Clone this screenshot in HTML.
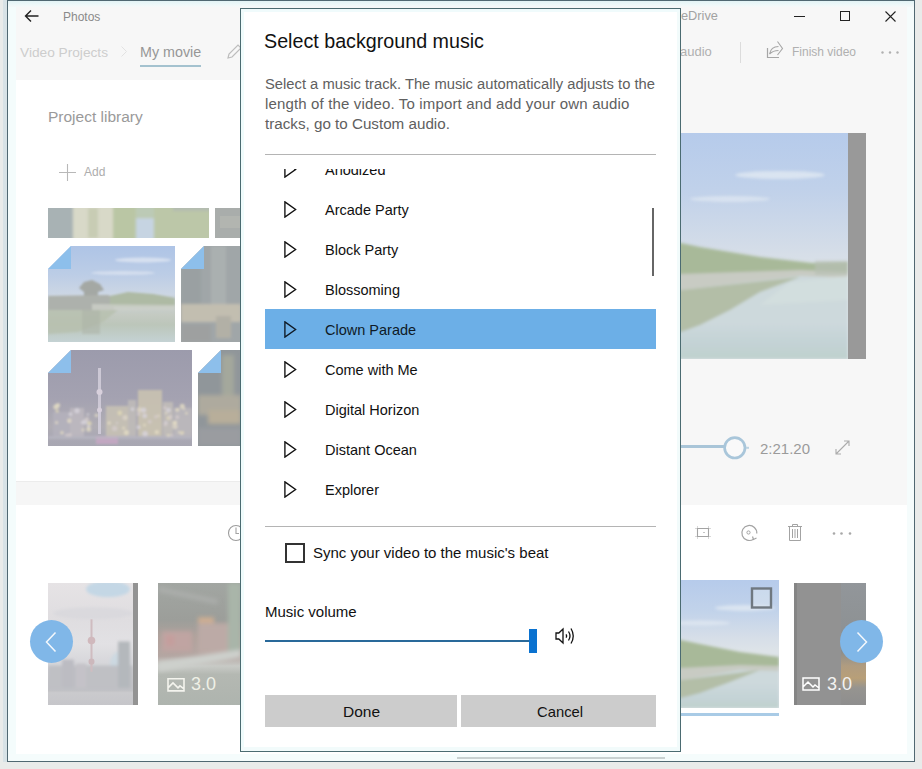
<!DOCTYPE html>
<html><head><meta charset="utf-8">
<style>
*{box-sizing:border-box;margin:0;padding:0}
html,body{width:922px;height:769px;overflow:hidden;background:#e9ebea;font-family:"Liberation Sans",sans-serif}
.a{position:absolute}
.t{position:absolute;white-space:nowrap;line-height:1}
</style></head><body>
<!-- outside strip -->
<div class="a" style="left:3px;top:0;width:4px;height:762px;background:#d7e2e6"></div>
<!-- window -->
<div class="a" id="win" style="left:7px;top:0;width:908px;height:762px;border:1px solid #506872;background:#f7f7f7;overflow:hidden">
</div>
<div class="a" style="left:8px;top:1px;width:906px;height:760px;overflow:hidden">
  <!-- header -->
  <div class="a" style="left:0;top:0;width:906px;height:79px;background:#f7f7f7"></div>
  <!-- left library card -->
  <div class="a" style="left:8px;top:79px;width:679px;height:401px;background:#fff"></div>
  <!-- right panel -->
  <div class="a" style="left:673px;top:79px;width:233px;height:425px;background:#f7f7f7"></div>
  <!-- band -->
  <div class="a" style="left:0;top:480px;width:673px;height:24px;background:#f6f6f6;border-top:1px solid #ececec"></div>
  <!-- storyboard -->
  <div class="a" style="left:8px;top:504px;width:898px;height:256px;background:#fff"></div>
  <div class="a" style="left:0;top:0;width:8px;height:760px;background:#f4fcfc"></div>
  <div class="a" style="left:899px;top:0;width:7px;height:760px;background:#f5fcfc"></div>
  <div class="a" style="left:0;top:753px;width:906px;height:7px;background:#f5fcfc"></div>
  <div class="a" style="left:0;top:0;width:906px;height:6px;background:linear-gradient(180deg,#e2f3f5,#eef8f9 60%,#f5f9f9)"></div>
</div>

<!-- title bar -->
<svg class="a" style="left:24px;top:9px" width="16" height="14" viewBox="0 0 16 14"><path d="M1.5 7H14.5M7 1.5L1.5 7L7 12.5" fill="none" stroke="#222" stroke-width="1.4"/></svg>
<div class="t" style="left:63px;top:11px;font-size:12px;color:#8a8a8a">Photos</div>
<div class="t" style="left:681px;top:10px;font-size:12.8px;color:#a2a2a2">eDrive</div>
<div class="a" style="left:794px;top:16px;width:11px;height:1px;background:#222"></div>
<div class="a" style="left:840px;top:11px;width:10px;height:10px;border:1px solid #222"></div>
<svg class="a" style="left:885px;top:11px" width="11" height="11" viewBox="0 0 11 11"><path d="M0.5 0.5L10.5 10.5M10.5 0.5L0.5 10.5" stroke="#222" stroke-width="1.1"/></svg>

<!-- nav -->
<div class="t" style="left:20px;top:46px;font-size:13.7px;color:#cdcdcd">Video Projects</div>
<svg class="a" style="left:121px;top:46px" width="6" height="11" viewBox="0 0 6 11"><path d="M0.5 0.5L5.5 5.5L0.5 10.5" fill="none" stroke="#e2e2e2" stroke-width="1"/></svg>
<div class="t" style="left:140px;top:45px;font-size:14.3px;color:#969696">My movie</div>
<div class="a" style="left:140px;top:65px;width:61px;height:2px;background:#a4c2cf"></div>
<svg class="a" style="left:226px;top:44px" width="16" height="16" viewBox="0 0 16 16"><path d="M2 14L3 10L12 1L15 4L6 13Z" fill="none" stroke="#bdbdbd" stroke-width="1.2"/></svg>
<div class="t" style="left:680px;top:45px;font-size:13px;color:#b0b0b0">audio</div>
<div class="a" style="left:740px;top:42px;width:1px;height:21px;background:#dcdcdc"></div>
<svg class="a" style="left:765px;top:38px" width="20" height="22" viewBox="0 0 20 22"><path d="M2.5 10V19.5H14" fill="none" stroke="#a6a6a6" stroke-width="1.2"/><path d="M12.5 3.5L17.5 10.5L12.5 17M4.5 16Q6 8.5 13.5 8.5M4.5 16Q8 12.5 13.5 12.5" fill="none" stroke="#a6a6a6" stroke-width="1.1"/></svg>
<div class="t" style="left:792px;top:46px;font-size:12px;color:#b0b0b0">Finish video</div>
<svg class="a" style="left:879px;top:50px" width="22" height="5" viewBox="0 0 22 5"><circle cx="3.5" cy="2.5" r="1.2" fill="#b0b0b0"/><circle cx="11" cy="2.5" r="1.2" fill="#b0b0b0"/><circle cx="18.5" cy="2.5" r="1.2" fill="#b0b0b0"/></svg>

<!-- library -->
<div class="t" style="left:48px;top:109px;font-size:15.5px;color:#9a9a9a">Project library</div>
<svg class="a" style="left:59px;top:164px" width="17" height="17" viewBox="0 0 17 17"><path d="M8.5 0V17M0 8.5H17" stroke="#b8b8b8" stroke-width="1.1"/></svg>
<div class="t" style="left:84px;top:166px;font-size:12px;color:#adadad">Add</div>

<!-- photos -->
<svg class="a" style="left:48px;top:208px" width="161" height="30" viewBox="0 0 161 30">
<defs><filter id="p1b" x="-5%" y="-20%" width="110%" height="140%"><feGaussianBlur stdDeviation="1.5"/></filter></defs>
<rect width="161" height="30" fill="#bcc7a8"/>
<g filter="url(#p1b)">
<rect x="-5" y="-5" width="30" height="40" fill="#a8b2b4"/>
<rect x="25" y="-5" width="40" height="40" fill="#d8d9c8"/>
<rect x="40" y="0" width="10" height="30" fill="#c8ccb4"/>
<rect x="65" y="-5" width="22" height="40" fill="#bac6a4"/>
<rect x="88" y="10" width="18" height="25" fill="#c6d4e2"/>
<rect x="88" y="-5" width="18" height="14" fill="#bccab6"/>
<rect x="125" y="-5" width="40" height="8" fill="#b4bcb0"/>
</g></svg>
<svg class="a" style="left:215px;top:208px" width="30" height="30" viewBox="0 0 30 30"><rect width="30" height="30" fill="#a9adab"/><rect x="5" y="8" width="20" height="12" fill="#b6b8b2" opacity=".7"/></svg>

<svg class="a" style="left:48px;top:246px" width="127" height="96" viewBox="0 0 127 96">
<defs><filter id="pab" x="-5%" y="-5%" width="110%" height="110%"><feGaussianBlur stdDeviation="1.2"/></filter>
<linearGradient id="pag" x1="0" y1="0" x2="0" y2="1"><stop offset="0" stop-color="#aec4e6"/><stop offset=".3" stop-color="#bccde6"/><stop offset=".5" stop-color="#ccd6e4"/><stop offset=".6" stop-color="#c8cfd0"/><stop offset=".72" stop-color="#c4cac2"/><stop offset=".82" stop-color="#bcc6ba"/><stop offset="1" stop-color="#c4d2d4"/></linearGradient></defs>
<rect width="127" height="96" fill="url(#pag)"/>
<g filter="url(#pab)">
<ellipse cx="95" cy="14" rx="28" ry="2.5" fill="#e4eaf4" opacity=".7"/>
<ellipse cx="75" cy="27" rx="32" ry="2" fill="#e4eaf4" opacity=".6"/>
<polygon points="31,42 36,36 44,34 52,38 56,44 50,46 50,52 36,52 36,46" fill="#a4a8a4"/>
<polygon points="0,50 60,49 66,52 66,64 0,64" fill="#adb1ac"/>
<polygon points="62,50 80,46 105,48 127,52 127,61 62,61" fill="#aebaa4"/>
<polygon points="44,58 127,59 127,64 44,65" fill="#ccd0c8" opacity=".8"/>
<polygon points="0,64 70,64 55,76 30,86 0,88" fill="#b6bfae" opacity=".8"/>
<rect x="34" y="64" width="18" height="24" fill="#adb4a8" opacity=".6"/>
</g></svg>
<svg class="a" style="left:48px;top:246px" width="23" height="23" viewBox="0 0 23 23"><polygon points="0,0 23,0 0,23" fill="#fff"/><polygon points="23,0 23,23 0,23" fill="#8dbfeb"/></svg>
<svg class="a" style="left:181px;top:246px" width="60" height="96" viewBox="0 0 60 96">
<defs><filter id="pbb" x="-10%" y="-10%" width="120%" height="120%"><feGaussianBlur stdDeviation="1.5"/></filter></defs>
<rect width="60" height="96" fill="#a0a6a8"/>
<g filter="url(#pbb)">
<rect x="0" y="0" width="20" height="60" fill="#9aa0a2"/>
<rect x="30" y="0" width="15" height="60" fill="#aab0b0"/>
<rect x="0" y="58" width="60" height="18" fill="#c2beb0"/>
<rect x="35" y="70" width="15" height="22" fill="#b2b0a6"/>
<rect x="0" y="78" width="30" height="18" fill="#9ea0a0"/>
</g></svg>
<svg class="a" style="left:181px;top:246px" width="23" height="23" viewBox="0 0 23 23"><polygon points="0,0 23,0 0,23" fill="#fff"/><polygon points="23,0 23,23 0,23" fill="#8dbfeb"/></svg>
<svg class="a" style="left:48px;top:350px" width="144" height="96" viewBox="0 0 144 96">
<defs><filter id="pcb" x="-5%" y="-5%" width="110%" height="110%"><feGaussianBlur stdDeviation="1.3"/></filter>
<linearGradient id="pcg" x1="0" y1="0" x2="0" y2="1"><stop offset="0" stop-color="#9c9bac"/><stop offset=".5" stop-color="#a4a2b1"/><stop offset=".8" stop-color="#b0adb4"/><stop offset=".9" stop-color="#aaa8b4"/><stop offset="1" stop-color="#a8a7b2"/></linearGradient></defs>
<rect width="144" height="96" fill="url(#pcg)"/>
<g filter="url(#pcb)">
<rect x="5" y="62" width="18" height="24" fill="#b4b2bc" opacity=".85"/>
<rect x="22" y="58" width="14" height="28" fill="#bdb9c0" opacity=".85"/>
<rect x="58" y="56" width="22" height="30" fill="#c8c2b4" opacity=".85"/>
<rect x="80" y="50" width="8" height="36" fill="#c0bcb8" opacity=".85"/>
<rect x="90" y="40" width="24" height="46" fill="#cbc4b0" opacity=".85"/>
<rect x="115" y="52" width="10" height="34" fill="#c2bdb8" opacity=".85"/>
<rect x="126" y="58" width="18" height="28" fill="#bcb8bc" opacity=".85"/>
<circle cx="37.1" cy="71.9" r="2.7" fill="#d8d4dc" opacity=".8"/>
<circle cx="69.0" cy="73.0" r="1.2" fill="#d4cccc" opacity=".8"/>
<circle cx="118.1" cy="63.0" r="1.5" fill="#ddd6c6" opacity=".8"/>
<circle cx="101.8" cy="71.8" r="2.0" fill="#d4cccc" opacity=".8"/>
<circle cx="91.3" cy="59.7" r="2.6" fill="#ddd6c6" opacity=".8"/>
<circle cx="75.6" cy="78.0" r="1.5" fill="#e4dcc4" opacity=".8"/>
<circle cx="134.3" cy="56.3" r="2.5" fill="#e4dcc4" opacity=".8"/>
<circle cx="41.4" cy="73.4" r="2.3" fill="#e0d8b8" opacity=".8"/>
<circle cx="129.3" cy="67.2" r="1.9" fill="#d4cccc" opacity=".8"/>
<circle cx="131.3" cy="82.2" r="1.3" fill="#e4dcc4" opacity=".8"/>
<circle cx="71.8" cy="63.0" r="2.4" fill="#e0d8b8" opacity=".8"/>
<circle cx="120.5" cy="68.1" r="2.1" fill="#e0d8b8" opacity=".8"/>
<circle cx="77.1" cy="67.6" r="2.6" fill="#ddd6c6" opacity=".8"/>
<circle cx="97.1" cy="83.8" r="2.8" fill="#d8d4dc" opacity=".8"/>
<circle cx="95.6" cy="60.1" r="2.7" fill="#d8d4dc" opacity=".8"/>
<circle cx="127.1" cy="72.6" r="2.2" fill="#ddd6c6" opacity=".8"/>
<circle cx="138.4" cy="63.3" r="1.3" fill="#e4dcc4" opacity=".8"/>
<circle cx="120.3" cy="85.7" r="1.8" fill="#e4dcc4" opacity=".8"/>
<circle cx="14.0" cy="82.8" r="1.7" fill="#e4dcc4" opacity=".8"/>
<circle cx="108.8" cy="82.1" r="2.2" fill="#e4dcc4" opacity=".8"/>
<circle cx="107.8" cy="66.7" r="1.7" fill="#d4cccc" opacity=".8"/>
<circle cx="123.9" cy="85.4" r="1.6" fill="#d4cccc" opacity=".8"/>
<circle cx="9.9" cy="55.2" r="2.2" fill="#e4dcc4" opacity=".8"/>
<circle cx="9.2" cy="61.1" r="1.7" fill="#e0d8b8" opacity=".8"/>
<circle cx="40.6" cy="76.4" r="1.7" fill="#d8d4dc" opacity=".8"/>
<circle cx="134.4" cy="82.8" r="1.8" fill="#e0d8b8" opacity=".8"/>
<circle cx="122.4" cy="67.0" r="2.3" fill="#d4cccc" opacity=".8"/>
<circle cx="18.8" cy="85.2" r="1.6" fill="#d4cccc" opacity=".8"/>
<circle cx="90.6" cy="77.2" r="1.9" fill="#d8d4dc" opacity=".8"/>
<circle cx="39.9" cy="64.4" r="1.2" fill="#d8d4dc" opacity=".8"/>
<circle cx="61.1" cy="73.0" r="1.8" fill="#e4dcc4" opacity=".8"/>
<circle cx="84.5" cy="59.1" r="1.9" fill="#d8d4dc" opacity=".8"/>
<circle cx="96.7" cy="65.9" r="2.4" fill="#d8d4dc" opacity=".8"/>
<circle cx="8.0" cy="56.9" r="2.7" fill="#e4dcc4" opacity=".8"/>
<circle cx="38.9" cy="69.1" r="2.2" fill="#d4cccc" opacity=".8"/>
<circle cx="29.0" cy="60.7" r="2.6" fill="#d8d4dc" opacity=".8"/>
<circle cx="40.7" cy="79.4" r="2.4" fill="#e4dcc4" opacity=".8"/>
<circle cx="8.6" cy="72.6" r="1.7" fill="#ddd6c6" opacity=".8"/>
<circle cx="35.0" cy="79.9" r="1.7" fill="#ddd6c6" opacity=".8"/>
<circle cx="96.5" cy="75.1" r="1.4" fill="#e4dcc4" opacity=".8"/>
<circle cx="48.5" cy="65.3" r="1.9" fill="#ddd6c6" opacity=".8"/>
<circle cx="120.5" cy="60.2" r="2.4" fill="#d8d4dc" opacity=".8"/>
<circle cx="34.4" cy="72.6" r="1.6" fill="#d8d4dc" opacity=".8"/>
<circle cx="21.3" cy="71.4" r="1.7" fill="#ddd6c6" opacity=".8"/>
<circle cx="117.9" cy="72.8" r="1.7" fill="#d8d4dc" opacity=".8"/>
<circle cx="116.8" cy="57.7" r="1.8" fill="#d4cccc" opacity=".8"/>
<circle cx="22.5" cy="64.1" r="1.9" fill="#d8d4dc" opacity=".8"/>
<circle cx="90.6" cy="64.0" r="1.9" fill="#d4cccc" opacity=".8"/>
<circle cx="129.3" cy="59.8" r="2.0" fill="#e4dcc4" opacity=".8"/>
<circle cx="117.4" cy="74.3" r="1.9" fill="#d4cccc" opacity=".8"/>
<circle cx="133.3" cy="83.7" r="1.3" fill="#ddd6c6" opacity=".8"/>
<circle cx="66.7" cy="78.4" r="2.7" fill="#d4cccc" opacity=".8"/>
<circle cx="78.4" cy="82.6" r="2.6" fill="#e4dcc4" opacity=".8"/>
<circle cx="136.1" cy="58.7" r="1.3" fill="#ddd6c6" opacity=".8"/>
<circle cx="127.0" cy="76.5" r="2.6" fill="#ddd6c6" opacity=".8"/>
<circle cx="126.5" cy="72.9" r="2.0" fill="#e4dcc4" opacity=".8"/>
<circle cx="21.3" cy="70.6" r="2.3" fill="#ddd6c6" opacity=".8"/>
<circle cx="75.9" cy="67.8" r="1.4" fill="#d4cccc" opacity=".8"/>
<circle cx="21.9" cy="85.1" r="2.0" fill="#d4cccc" opacity=".8"/>
<circle cx="110.6" cy="65.9" r="1.4" fill="#ddd6c6" opacity=".8"/>
<rect x="48" y="86" width="22" height="8" fill="#c8a8c4" opacity=".8"/>
<rect x="0" y="86" width="144" height="3" fill="#bcbac4" opacity=".6"/>
</g>
<rect x="50" y="18" width="3" height="66" fill="#d4cfdc" opacity=".85"/>
<circle cx="51.5" cy="42" r="3" fill="#d8d0dc"/>
<circle cx="51.5" cy="60" r="2.5" fill="#d8d0dc"/>
</svg>
<svg class="a" style="left:48px;top:350px" width="23" height="23" viewBox="0 0 23 23"><polygon points="0,0 23,0 0,23" fill="#fff"/><polygon points="23,0 23,23 0,23" fill="#8dbfeb"/></svg>
<svg class="a" style="left:198px;top:350px" width="43" height="96" viewBox="0 0 43 96">
<defs><filter id="pdb" x="-10%" y="-10%" width="120%" height="120%"><feGaussianBlur stdDeviation="2"/></filter></defs>
<rect width="43" height="96" fill="#90969a"/>
<g filter="url(#pdb)">
<rect x="24" y="5" width="12" height="50" fill="#a4a89c"/>
<rect x="0" y="45" width="43" height="20" fill="#aeaa9e"/>
<rect x="10" y="60" width="33" height="14" fill="#b8ae9a"/>
<rect x="0" y="78" width="43" height="18" fill="#9a9ca0"/>
</g></svg>
<svg class="a" style="left:198px;top:350px" width="23" height="23" viewBox="0 0 23 23"><polygon points="0,0 23,0 0,23" fill="#fff"/><polygon points="23,0 23,23 0,23" fill="#8dbfeb"/></svg>

<!-- preview -->
<svg class="a" style="left:660px;top:133px" width="188" height="226" viewBox="0 0 188 226">
<defs><linearGradient id="pv_sky" x1="0" y1="0" x2="0" y2="1"><stop offset="0" stop-color="#b6cbeb"/><stop offset="0.25" stop-color="#c0d1ea"/><stop offset="0.5" stop-color="#d3dce8"/><stop offset="0.62" stop-color="#dde3e8"/></linearGradient>
<linearGradient id="pv_w" x1="0" y1="0" x2="0" y2="1"><stop offset="0.6" stop-color="#cdd9dc"/><stop offset="0.8" stop-color="#c4d3d6"/><stop offset="1" stop-color="#bfd1cd"/></linearGradient>
<filter id="pv_b" x="-5%" y="-5%" width="110%" height="110%"><feGaussianBlur stdDeviation="1.6"/></filter></defs>
<rect width="188" height="226" fill="url(#pv_sky)"/>
<g filter="url(#pv_b)">
<rect x="0" y="135" width="188" height="91" fill="url(#pv_w)"/>
<ellipse cx="120" cy="42" rx="45" ry="4" fill="#e6ecf4" opacity=".7"/>
<ellipse cx="70" cy="66" rx="40" ry="3" fill="#e6ecf4" opacity=".6"/>
<polygon points="0,105 21,110 40,114 100,124 152,130 188,129 188,143 140,139 21,143 0,144" fill="#a8b999"/>
<polygon points="0,141 21,141 140,137 188,139 188,145 140,143 21,157 0,157" fill="#c8cbc3"/>
<polygon points="0,157 21,157 140,144 100,159 70,177 40,192 21,199 0,202" fill="#b3bea7"/>
<polygon points="130,149 188,143 188,167 100,172" fill="#d3dedf" opacity=".8"/>
<rect x="155" y="128" width="33" height="14" fill="#b7bfb4" opacity=".7"/>
</g>
</svg>
<div class="a" style="left:848px;top:133px;width:18px;height:226px;background:#999"></div>
<div class="a" style="left:675px;top:445px;width:50px;height:3px;background:#a9c5d8"></div>
<svg class="a" style="left:721px;top:434px" width="28" height="28" viewBox="0 0 28 28"><circle cx="13.8" cy="13.8" r="10.2" fill="#f9f9f9" stroke="#a9c6da" stroke-width="2.7"/><path d="M25 13.8H28" stroke="#bcd3e2" stroke-width="2"/></svg>
<div class="t" style="left:760px;top:441px;font-size:15px;color:#9b9b9b">2:21.20</div>
<svg class="a" style="left:835px;top:440px" width="15" height="15" viewBox="0 0 15 15"><path d="M1 14L14 1M1 9V14H6M9 1H14V6" fill="none" stroke="#ababab" stroke-width="1.1"/></svg>

<!-- storyboard toolbar -->
<svg class="a" style="left:227px;top:524px" width="18" height="18" viewBox="0 0 18 18"><circle cx="9" cy="9" r="7.5" fill="none" stroke="#9c9c9c" stroke-width="1.1"/><path d="M9 3.5V9.5H12" fill="none" stroke="#a3a3a3" stroke-width="1.1"/></svg>
<svg class="a" style="left:694px;top:525px" width="18" height="15" viewBox="0 0 18 15"><path d="M3.5 3.5H14.5V11.5H3.5Z" fill="none" stroke="#a3a3a3" stroke-width="1.1"/><path d="M1.5 3.5H2.5M3.5 1.5V2.5M14.5 1.5V2.5M15.5 3.5H16.5M15.5 11.5H16.5M14.5 12.5V13.5M3.5 12.5V13.5M1.5 11.5H2.5" fill="none" stroke="#b0b0b0" stroke-width="1"/><path d="M9 7.5H11" stroke="#c4c4c4" stroke-width="1"/></svg>
<svg class="a" style="left:740px;top:523px" width="19" height="19" viewBox="0 0 19 19"><path d="M13.5 16.2A7.5 7.5 0 1 1 16.8 10.5" fill="none" stroke="#a3a3a3" stroke-width="1.2"/><path d="M12.5 13.5L13.5 16.5L16.5 15" fill="none" stroke="#a3a3a3" stroke-width="1.2"/><circle cx="8.5" cy="9.5" r="1.6" fill="none" stroke="#a3a3a3" stroke-width="1"/></svg>
<svg class="a" style="left:788px;top:524px" width="14" height="17" viewBox="0 0 14 17"><path d="M0 2.5H14M4.5 2.5V0.5H9.5V2.5M1.5 2.5V16.5H12.5V2.5M4.5 5V14M7 5V14M9.5 5V14" fill="none" stroke="#a3a3a3" stroke-width="1"/></svg>
<svg class="a" style="left:831px;top:531px" width="22" height="5" viewBox="0 0 22 5"><circle cx="3" cy="2.5" r="1.3" fill="#a8a8a8"/><circle cx="10.5" cy="2.5" r="1.3" fill="#a8a8a8"/><circle cx="19" cy="2.5" r="1.3" fill="#a8a8a8"/></svg>

<!-- storyboard thumbs -->
<svg class="a" style="left:48px;top:583px" width="90" height="122" viewBox="0 0 90 121" preserveAspectRatio="none">
<defs><filter id="t1b" x="-10%" y="-10%" width="120%" height="120%"><feGaussianBlur stdDeviation="1.8"/></filter>
<linearGradient id="t1g" x1="0" y1="0" x2="0" y2="1"><stop offset="0" stop-color="#e6e3e5"/><stop offset=".3" stop-color="#dfdde0"/><stop offset=".5" stop-color="#e2e1e4"/><stop offset=".66" stop-color="#d6d6da"/><stop offset=".8" stop-color="#c6c6ca"/><stop offset=".88" stop-color="#c2c2c6"/><stop offset=".9" stop-color="#cacacd"/><stop offset="1" stop-color="#c6c6ca"/></linearGradient></defs>
<rect width="90" height="121" fill="url(#t1g)"/>
<g filter="url(#t1b)">
<ellipse cx="60" cy="6" rx="22" ry="8" fill="#bcd4e6" opacity=".8"/>
<ellipse cx="45" cy="30" rx="40" ry="6" fill="#d6d6da" opacity=".6"/>
<ellipse cx="72" cy="80" rx="10" ry="12" fill="#c4d8e4" opacity=".6"/>
<rect x="0" y="82" width="85" height="24" fill="#bfc0c4"/>
<rect x="70" y="58" width="12" height="46" fill="#b4b8bc"/>
<rect x="14" y="76" width="12" height="28" fill="#bcbcc2"/>
<rect x="28" y="80" width="10" height="24" fill="#c4c2c8"/>
</g>
<rect x="42.5" y="36" width="2" height="52" fill="#cfbcc0"/>
<circle cx="43.5" cy="57" r="3.8" fill="#d0b8bc"/>
<circle cx="43.5" cy="78" r="3" fill="#ccb8bc"/>
<rect x="85" y="0" width="5" height="121" fill="#939393"/>
</svg>
<svg class="a" style="left:158px;top:583px" width="83" height="122" viewBox="0 0 83 121" preserveAspectRatio="none">
<defs><filter id="t2b" x="-10%" y="-10%" width="120%" height="120%"><feGaussianBlur stdDeviation="2"/></filter>
<linearGradient id="t2g" x1="0" y1="0" x2="0" y2="1"><stop offset="0" stop-color="#a2a6a2"/><stop offset=".3" stop-color="#9c9e9a"/><stop offset=".45" stop-color="#b0a29c"/><stop offset=".6" stop-color="#b4a6a2"/><stop offset=".68" stop-color="#c8cac6"/><stop offset=".75" stop-color="#b4b8b2"/><stop offset="1" stop-color="#aeb4ae"/></linearGradient></defs>
<rect width="83" height="121" fill="url(#t2g)"/>
<g filter="url(#t2b)">
<rect x="70" y="0" width="13" height="70" fill="#a9b5a9"/>
<rect x="0" y="10" width="60" height="5" fill="#b0b2b0" opacity=".7" transform="rotate(12 30 13)"/>
<rect x="40" y="34" width="16" height="6" fill="#cfae92"/>
<rect x="4" y="48" width="30" height="20" fill="#c0a4a2"/><rect x="8" y="52" width="8" height="10" fill="#c89a9a" opacity=".7"/>
<rect x="40" y="40" width="30" height="30" fill="#bcaaa6"/>
<polygon points="0,78 83,66 83,74 0,88" fill="#cdd0cc"/>
</g>
<svg x="9" y="94" width="18" height="14" viewBox="0 0 18 14"><path d="M1 1H17V13H1ZM1 10L6 5L11 10L13 8L17 11" fill="none" stroke="#f4f4ee" stroke-width="1.6"/></svg>
</svg>
<div class="t" style="left:191px;top:675px;font-size:18px;color:#eef0e6">3.0</div>
<svg class="a" style="left:660px;top:580px" width="119" height="128" viewBox="0 0 119 128">
<defs><linearGradient id="t3s" x1="0" y1="0" x2="0" y2="1"><stop offset="0" stop-color="#b6cbeb"/><stop offset="0.25" stop-color="#c2d3ea"/><stop offset="0.45" stop-color="#d6dee8"/><stop offset="0.55" stop-color="#dde3e8"/></linearGradient>
<linearGradient id="t3w" x1="0" y1="0" x2="0" y2="1"><stop offset="0.5" stop-color="#cdd9dc"/><stop offset="0.8" stop-color="#c4d3d6"/><stop offset="1" stop-color="#bfd1cd"/></linearGradient>
<filter id="t3b" x="-5%" y="-5%" width="110%" height="110%"><feGaussianBlur stdDeviation="1.4"/></filter></defs>
<rect width="119" height="128" fill="url(#t3s)"/>
<g filter="url(#t3b)">
<rect x="0" y="78" width="119" height="50" fill="url(#t3w)"/>
<ellipse cx="85" cy="28" rx="30" ry="3" fill="#e6ecf4" opacity=".7"/>
<ellipse cx="40" cy="43" rx="30" ry="2.5" fill="#e6ecf4" opacity=".6"/>
<polygon points="0,56 21,60 40,64 80,72 119,77 119,88 80,88 21,89 0,90" fill="#a8b999"/>
<polygon points="0,88 21,88 80,85 119,86 119,91 80,90 21,100 0,100" fill="#c8cbc3"/>
<polygon points="0,100 21,100 100,90 70,102 40,113 21,118 0,120" fill="#b3bea7"/>
</g>
<rect x="92" y="8.5" width="19" height="19" fill="rgba(225,232,240,.45)" stroke="#6f7880" stroke-width="2.4"/>
</svg>
<div class="a" style="left:675px;top:713px;width:104px;height:3px;background:#a9cbe6"></div>
<div class="a" style="left:794px;top:583px;width:72px;height:122px;overflow:hidden;background:#929292">
 <div class="a" style="left:47px;top:0;width:25px;height:122px;background:linear-gradient(180deg,#92969a 0,#8e9294 35%,#8a8c8c 55%,#b09c80 68%,#b89f78 78%,#969490 86%,#8e8e8e 100%)"></div><div class="a" style="left:0;top:0;width:3px;height:122px;background:#858585"></div>
 <svg class="a" style="left:8px;top:94px" width="18" height="14" viewBox="0 0 18 14"><path d="M1 1H17V13H1ZM1 10L6 5L11 10L13 8L17 11" fill="none" stroke="#fff" stroke-width="1.5"/></svg>
 <div class="t" style="left:33px;top:92px;font-size:18px;color:#f2f2f2">3.0</div>
</div>
<div class="a" style="left:30px;top:620px;width:43px;height:43px;border-radius:50%;background:#80b7e8"></div>
<svg class="a" style="left:44px;top:631px" width="14" height="22" viewBox="0 0 14 22"><path d="M11.5 1.5L2.5 11L11.5 20.5" fill="none" stroke="#f4f8fc" stroke-width="1.5"/></svg>
<div class="a" style="left:840px;top:620px;width:43px;height:43px;border-radius:50%;background:#80b7e8"></div>
<svg class="a" style="left:855px;top:631px" width="14" height="22" viewBox="0 0 14 22"><path d="M2.5 1.5L11.5 11L2.5 20.5" fill="none" stroke="#f4f8fc" stroke-width="1.5"/></svg>

<div class="a" style="left:457px;top:757px;width:208px;height:2px;background:#c9d1d1"></div>
<!-- dialog -->
<div class="a" style="left:240px;top:8px;width:441px;height:744px;border:1px solid #4b6b71;background:#fff">
<div class="a" style="left:0;top:0;width:3px;height:742px;background:#f0fcfc"></div>
<div class="a" style="left:436px;top:0;width:3px;height:742px;background:#f2fbfb"></div>
<div class="a" style="left:0;top:0;width:439px;height:3px;background:#f0fbfc"></div>
<div class="a" style="left:0;top:738px;width:439px;height:4px;background:#f2fbfb"></div>
</div>
<div class="t" style="left:264px;top:32px;font-size:19.7px;color:#111">Select background music</div>
<div class="t" style="left:265px;top:77px;font-size:14.75px;color:#606060">Select a music track. The music automatically adjusts to the</div>
<div class="t" style="left:265px;top:96px;font-size:15px;letter-spacing:0.15px;color:#606060">length of the video. To import and add your own audio</div>
<div class="t" style="left:265px;top:116px;font-size:15.2px;color:#606060">tracks, go to Custom audio.</div>
<div class="a" style="left:265px;top:154px;width:391px;height:1px;background:#b4b4b4"></div>

<div class="a" style="left:265px;top:169px;width:391px;height:351px;overflow:hidden" id="list">
<div class="a" style="left:0;top:-20px;width:391px;height:40px;"><svg class="a" style="left:19px;top:12px" width="13" height="17" viewBox="0 0 13 17"><path d="M0.9 0.9L11.6 8.5L0.9 16.1Z" fill="none" stroke="#111" stroke-width="1.35" stroke-linejoin="miter"/></svg><div class="t" style="left:60px;top:14px;font-size:14.5px;color:#111">Anodized</div></div>
<div class="a" style="left:0;top:20px;width:391px;height:40px;"><svg class="a" style="left:19px;top:12px" width="13" height="17" viewBox="0 0 13 17"><path d="M0.9 0.9L11.6 8.5L0.9 16.1Z" fill="none" stroke="#111" stroke-width="1.35" stroke-linejoin="miter"/></svg><div class="t" style="left:60px;top:14px;font-size:14.5px;color:#111">Arcade Party</div></div>
<div class="a" style="left:0;top:60px;width:391px;height:40px;"><svg class="a" style="left:19px;top:12px" width="13" height="17" viewBox="0 0 13 17"><path d="M0.9 0.9L11.6 8.5L0.9 16.1Z" fill="none" stroke="#111" stroke-width="1.35" stroke-linejoin="miter"/></svg><div class="t" style="left:60px;top:14px;font-size:14.5px;color:#111">Block Party</div></div>
<div class="a" style="left:0;top:100px;width:391px;height:40px;"><svg class="a" style="left:19px;top:12px" width="13" height="17" viewBox="0 0 13 17"><path d="M0.9 0.9L11.6 8.5L0.9 16.1Z" fill="none" stroke="#111" stroke-width="1.35" stroke-linejoin="miter"/></svg><div class="t" style="left:60px;top:14px;font-size:14.5px;color:#111">Blossoming</div></div>
<div class="a" style="left:0;top:140px;width:391px;height:40px;background:#6cafe7;"><svg class="a" style="left:19px;top:12px" width="13" height="17" viewBox="0 0 13 17"><path d="M0.9 0.9L11.6 8.5L0.9 16.1Z" fill="none" stroke="#0f1a26" stroke-width="1.35" stroke-linejoin="miter"/></svg><div class="t" style="left:60px;top:14px;font-size:14.5px;color:#0f1a26">Clown Parade</div></div>
<div class="a" style="left:0;top:180px;width:391px;height:40px;"><svg class="a" style="left:19px;top:12px" width="13" height="17" viewBox="0 0 13 17"><path d="M0.9 0.9L11.6 8.5L0.9 16.1Z" fill="none" stroke="#111" stroke-width="1.35" stroke-linejoin="miter"/></svg><div class="t" style="left:60px;top:14px;font-size:14.5px;color:#111">Come with Me</div></div>
<div class="a" style="left:0;top:220px;width:391px;height:40px;"><svg class="a" style="left:19px;top:12px" width="13" height="17" viewBox="0 0 13 17"><path d="M0.9 0.9L11.6 8.5L0.9 16.1Z" fill="none" stroke="#111" stroke-width="1.35" stroke-linejoin="miter"/></svg><div class="t" style="left:60px;top:14px;font-size:14.5px;color:#111">Digital Horizon</div></div>
<div class="a" style="left:0;top:260px;width:391px;height:40px;"><svg class="a" style="left:19px;top:12px" width="13" height="17" viewBox="0 0 13 17"><path d="M0.9 0.9L11.6 8.5L0.9 16.1Z" fill="none" stroke="#111" stroke-width="1.35" stroke-linejoin="miter"/></svg><div class="t" style="left:60px;top:14px;font-size:14.5px;color:#111">Distant Ocean</div></div>
<div class="a" style="left:0;top:300px;width:391px;height:40px;"><svg class="a" style="left:19px;top:12px" width="13" height="17" viewBox="0 0 13 17"><path d="M0.9 0.9L11.6 8.5L0.9 16.1Z" fill="none" stroke="#111" stroke-width="1.35" stroke-linejoin="miter"/></svg><div class="t" style="left:60px;top:14px;font-size:14.5px;color:#111">Explorer</div></div>
<div class="a" style="left:0;top:340px;width:391px;height:40px;"><svg class="a" style="left:19px;top:12px" width="13" height="17" viewBox="0 0 13 17"><path d="M0.9 0.9L11.6 8.5L0.9 16.1Z" fill="none" stroke="#111" stroke-width="1.35" stroke-linejoin="miter"/></svg><div class="t" style="left:60px;top:14px;font-size:14.5px;color:#111">Fresh Start</div></div>
<div class="a" style="left:387px;top:39px;width:2px;height:68px;background:#666"></div>
</div>

<div class="a" style="left:265px;top:526px;width:391px;height:1px;background:#b4b4b4"></div>
<div class="a" style="left:285px;top:543px;width:20px;height:20px;border:2px solid #333"></div>
<div class="t" style="left:313px;top:545px;font-size:15px;color:#111">Sync your video to the music's beat</div>
<div class="t" style="left:265px;top:604px;font-size:15px;color:#111">Music volume</div>
<div class="a" style="left:265px;top:640px;width:268px;height:2px;background:#29699a"></div>
<div class="a" style="left:529px;top:629px;width:8px;height:24px;background:#0a72d0"></div>
<svg class="a" style="left:555px;top:626px" width="21" height="20" viewBox="0 0 21 20"><path d="M1 7H3.8L8 3V17L3.8 13H1Z" fill="none" stroke="#111" stroke-width="1.3"/><path d="M11 8.3Q12.2 10 11 11.7M13.5 5.5Q16.5 10 13.5 14.5M16 2.5Q20.5 10 16 17.5" fill="none" stroke="#111" stroke-width="1.3"/></svg>
<div class="a" style="left:265px;top:695px;width:192px;height:32px;background:#cccccc"></div>
<div class="a" style="left:461px;top:695px;width:195px;height:32px;background:#cccccc"></div>
<div class="t" style="left:343px;top:704px;font-size:15.5px;color:#111">Done</div>
<div class="t" style="left:537px;top:705px;font-size:14.8px;color:#111">Cancel</div>
</body></html>
